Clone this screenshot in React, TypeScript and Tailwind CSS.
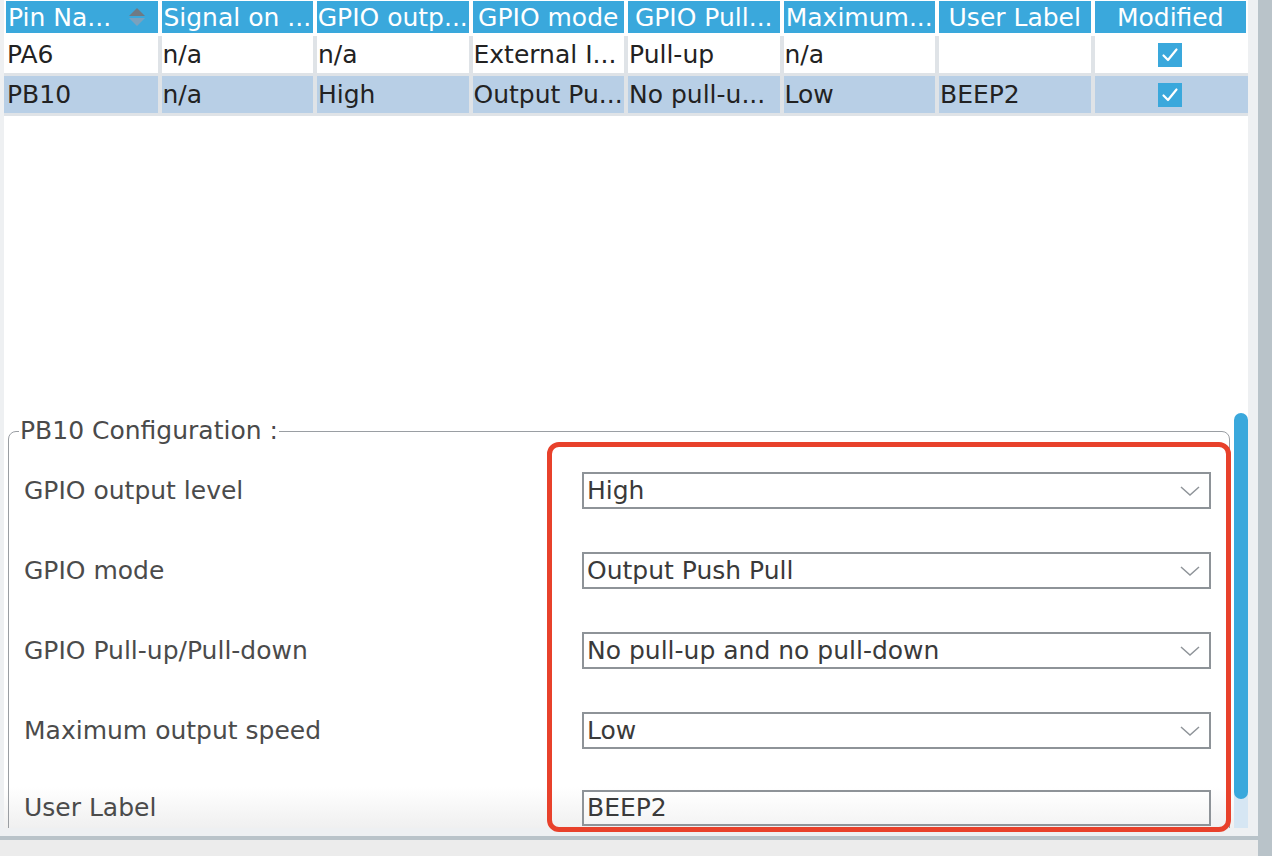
import React from "react";

const headers = [
  "Pin Na...",
  "Signal on ...",
  "GPIO outp...",
  "GPIO mode",
  "GPIO Pull...",
  "Maximum...",
  "User Label",
  "Modified",
];

const rows = [
  { cells: ["PA6", "n/a", "n/a", "External I...", "Pull-up", "n/a", ""], selected: false },
  { cells: ["PB10", "n/a", "High", "Output Pu...", "No pull-u...", "Low", "BEEP2"], selected: true },
];

function SortIcon() {
  return (
    <svg width="18" height="20" viewBox="0 0 18 20" className="ml-auto mr-[12px] shrink-0 -mt-[2px]">
      <polygon points="9,1 17,9 1,9" fill="#6f7a83" />
      <polygon points="1,11 17,11 9,19" fill="#7aa1bd" />
    </svg>
  );
}

function Check() {
  return (
    <svg width="24" height="24" viewBox="0 0 24 24">
      <rect x="0" y="0" width="24" height="24" fill="#3aa8dc" />
      <path d="M5.5 12.5 L10 17 L18.5 6.5" stroke="white" strokeWidth="2.2" fill="none" strokeLinecap="round" strokeLinejoin="round" />
    </svg>
  );
}

function Chevron() {
  return (
    <svg width="20" height="10" viewBox="0 0 20 10" className="shrink-0">
      <path d="M1 1 L10 9 L19 1" stroke="#8f9499" strokeWidth="1.5" fill="none" />
    </svg>
  );
}

function SelectBox({ value }: { value: string }) {
  return (
    <div className="w-[629px] h-[37px] border-2 border-[#8e9398] bg-white flex items-center justify-between pl-[3px] pr-[9px]">
      <span className="text-[#3a3a3a] whitespace-nowrap">{value}</span>
      <Chevron />
    </div>
  );
}

const formRows = [
  { label: "GPIO output level", value: "High" },
  { label: "GPIO mode", value: "Output Push Pull" },
  { label: "GPIO Pull-up/Pull-down", value: "No pull-up and no pull-down" },
  { label: "Maximum output speed", value: "Low" },
];

export default function App() {
  return (
    <div className="relative w-[1272px] h-[856px] flex bg-[#ececec] overflow-hidden font-['DejaVu_Sans',sans-serif] text-[25px] leading-[28px]">
      <div className="flex flex-col w-[1258px]">
        <div className="flex h-[828px] bg-[#eef0f2]">
          <div className="w-[4px] shrink-0" />
          <div className="w-[1244px] shrink-0 bg-white flex flex-col">
            {/* Table */}
            <div className="h-[413px] pt-[1px] flex flex-col">
              <div className="grid grid-cols-8 gap-x-[4px] px-[2px] h-[32px]">
                {headers.map((h, i) => (
                  <div
                    key={h}
                    className={
                      "bg-[#3aa8dc] text-white flex items-center whitespace-nowrap overflow-hidden pt-[2px] " +
                      (i === 0 ? "justify-start pl-[2px]" : "justify-center")
                    }
                  >
                    <span>{h}</span>
                    {i === 0 && <SortIcon />}
                  </div>
                ))}
              </div>
              <div className="mt-[3px] flex flex-col gap-[3px] pb-[3px] bg-[#dfe3e7]">
                {rows.map((r, ri) => (
                  <div
                    key={ri}
                    className={
                      "grid grid-cols-8 gap-x-[4px] h-[37px] border-x-[2px] " +
                      (r.selected ? "border-[#b8cfe6]" : "border-white")
                    }
                  >
                    {r.cells.map((c, ci) => (
                      <div
                        key={ci}
                        className={
                          "flex items-center whitespace-nowrap overflow-hidden text-[#222222] pl-[1px] pt-[1px] " +
                          (r.selected ? "bg-[#b8cfe6]" : "bg-white")
                        }
                      >
                        {c}
                      </div>
                    ))}
                    <div
                      className={
                        "flex items-center justify-center " + (r.selected ? "bg-[#b8cfe6]" : "bg-white")
                      }
                    >
                      <Check />
                    </div>
                  </div>
                ))}
              </div>
            </div>

            {/* Config panel */}
            <div className="h-[415px] flex bg-linear-to-b from-white from-[90%] to-[#f0f0f0]">
              <div className="w-[1226px] shrink-0 pl-[4px] pt-[4px] overflow-hidden">
                <fieldset className="w-[1222px] h-[440px] border border-[#9a9ea3] rounded-t-[8px] p-0 m-0">
                  <legend className="ml-[10px] px-[1px] leading-[28px] text-[#4a4a4a]">PB10 Configuration :</legend>
                  <div className="pl-[15px] pt-[27px] flex flex-col">
                    {formRows.map((f, i) => (
                      <div key={f.label} className={"flex items-center h-[37px] " + (i > 0 ? "mt-[43px]" : "")}>
                        <div className="w-[558px] text-[#4b4b4b] whitespace-nowrap">{f.label}</div>
                        <SelectBox value={f.value} />
                      </div>
                    ))}
                    <div className="flex items-center h-[36px] mt-[41px]">
                      <div className="w-[558px] text-[#4b4b4b] whitespace-nowrap">User Label</div>
                      <div className="w-[629px] h-[36px] border-2 border-[#8e9398] bg-linear-to-b from-white to-[#f4f4f4] flex items-center pl-[3px]">
                        <span className="text-[#3a3a3a]">BEEP2</span>
                      </div>
                    </div>
                  </div>
                </fieldset>
              </div>
              <div className="ml-[4px] w-[14px] shrink-0 flex flex-col bg-[linear-gradient(to_bottom,white_50%,#d6e6f3_50%)]">
                <div className="h-[386px] rounded-full bg-[#3aa8dc]" />
              </div>
            </div>
          </div>
          <div className="w-[10px] shrink-0" />
        </div>
        <div className="h-[8px] bg-[#eef0f2]" />
        <div className="h-[4px] bg-[#b9c3c9]" />
        <div className="flex-1 bg-[#ececec]" />
      </div>
      <div className="w-[14px] bg-[#b9c3c9]" />

      {/* Red annotation box */}
      <div className="absolute left-[547px] top-[442px] w-[684px] h-[390px] border-[5px] border-[#e8412b] rounded-[12px] pointer-events-none" />
    </div>
  );
}
